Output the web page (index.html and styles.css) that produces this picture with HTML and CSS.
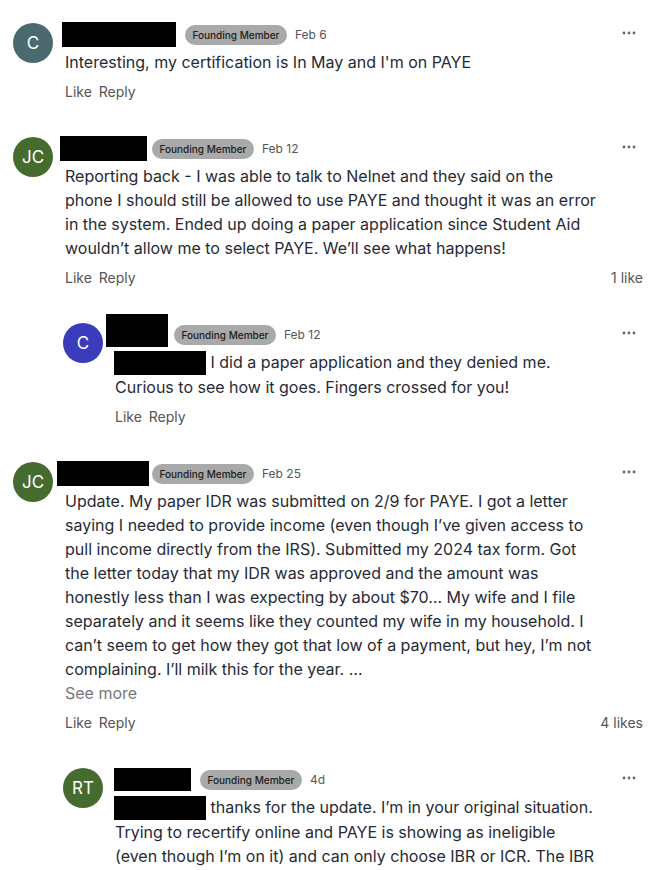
FILE: index.html
```html
<!DOCTYPE html>
<html>
<head>
  <title>Comments</title>
  <link rel="stylesheet" href="styles.css">
</head>
<body>
  <div class="thread">

    <div class="comment">
      <div class="avatar teal">C</div>
      <div class="comment-main">
        <div class="comment-head">
          <span class="redact name-1"></span>
          <span class="badge">Founding Member</span>
          <span class="date">Feb 6</span>
          <svg class="dots" width="16" height="16" viewBox="0 0 16 16"><circle cx="3" cy="8" r="1.4"/><circle cx="8" cy="8" r="1.4"/><circle cx="13" cy="8" r="1.4"/></svg>
        </div>
        <p class="comment-text">Interesting, my certification is In May and I'm on PAYE</p>
        <div class="comment-actions">
          <span><a>Like</a> <a>Reply</a></span>
        </div>
      </div>
    </div>

    <div class="comment">
      <div class="avatar green">JC</div>
      <div class="comment-main">
        <div class="comment-head">
          <span class="redact name-2"></span>
          <span class="badge">Founding Member</span>
          <span class="date">Feb 12</span>
          <svg class="dots" width="16" height="16" viewBox="0 0 16 16"><circle cx="3" cy="8" r="1.4"/><circle cx="8" cy="8" r="1.4"/><circle cx="13" cy="8" r="1.4"/></svg>
        </div>
        <p class="comment-text">Reporting back - I was able to talk to Nelnet and they said on the phone I should still be allowed to use PAYE and thought it was an error in the system. Ended up doing a paper application since Student Aid wouldn’t allow me to select PAYE. We’ll see what happens!</p>
        <div class="comment-actions">
          <span><a>Like</a> <a>Reply</a></span>
          <span class="likes">1 like</span>
        </div>
      </div>
    </div>

    <div class="comment reply">
      <div class="avatar blue">C</div>
      <div class="comment-main">
        <div class="comment-head">
          <span class="redact name-3"></span>
          <span class="badge">Founding Member</span>
          <span class="date">Feb 12</span>
          <svg class="dots" width="16" height="16" viewBox="0 0 16 16"><circle cx="3" cy="8" r="1.4"/><circle cx="8" cy="8" r="1.4"/><circle cx="13" cy="8" r="1.4"/></svg>
        </div>
        <p class="comment-text"><span class="redact mention"></span> I did a paper application and they denied me. Curious to see how it goes. Fingers crossed for you!</p>
        <div class="comment-actions">
          <span><a>Like</a> <a>Reply</a></span>
        </div>
      </div>
    </div>

    <div class="comment">
      <div class="avatar green">JC</div>
      <div class="comment-main">
        <div class="comment-head">
          <span class="redact name-4"></span>
          <span class="badge">Founding Member</span>
          <span class="date">Feb 25</span>
          <svg class="dots" width="16" height="16" viewBox="0 0 16 16"><circle cx="3" cy="8" r="1.4"/><circle cx="8" cy="8" r="1.4"/><circle cx="13" cy="8" r="1.4"/></svg>
        </div>
        <p class="comment-text">Update. My paper IDR was submitted on 2/9 for PAYE. I got a letter saying I needed to provide income (even though I’ve given access to pull income directly from the IRS). Submitted my 2024 tax form. Got the letter today that my IDR was approved and the amount was honestly less than I was expecting by about $70… My wife and I file separately and it seems like they counted my wife in my household. I can’t seem to get how they got that low of a payment, but hey, I’m not complaining. I’ll milk this for the year. …</p>
        <a class="see-more">See more</a>
        <div class="comment-actions">
          <span><a>Like</a> <a>Reply</a></span>
          <span class="likes">4 likes</span>
        </div>
      </div>
    </div>

    <div class="comment reply">
      <div class="avatar green">RT</div>
      <div class="comment-main">
        <div class="comment-head">
          <span class="redact name-5"></span>
          <span class="badge">Founding Member</span>
          <span class="date">4d</span>
          <svg class="dots" width="16" height="16" viewBox="0 0 16 16"><circle cx="3" cy="8" r="1.4"/><circle cx="8" cy="8" r="1.4"/><circle cx="13" cy="8" r="1.4"/></svg>
        </div>
        <p class="comment-text"><span class="redact mention"></span> thanks for the update. I’m in your original situation. Trying to recertify online and PAYE is showing as ineligible (even though I’m on it) and can only choose IBR or ICR. The IBR</p>
      </div>
    </div>

  </div>
</body>
</html>
```

FILE: styles.css
```css
body {
  margin: 0;
  background-color: #fff;
  font-family: Inter, "Noto Sans", sans-serif;
  color: #272a35;
  overflow: hidden;
}

.thread {
  padding: 22px 19px 0 13px;
  display: flex;
  flex-direction: column;
  gap: 34px;
}

.comment {
  display: flex;
  gap: 12px;
}

.comment.reply {
  padding-left: 50px;
}

.avatar {
  flex: none;
  width: 40px;
  height: 40px;
  border-radius: 50%;
  color: #fff;
  font-size: 17px;
  display: flex;
  align-items: center;
  justify-content: center;
  margin-top: 1px;
}

.teal { background-color: #4a6a6f; }
.green { background-color: #466b2f; }
.blue { background-color: #3a3cbc; }

.comment-main {
  flex: 1;
  min-width: 0;
}

.comment-head {
  display: flex;
  align-items: center;
  height: 25px;
}

.redact {
  display: inline-block;
  background-color: #000;
}

.name-1 { width: 114px; height: 25px; margin-left: -3px; margin-right: 9px; }
.name-2 { width: 87px; height: 25px; margin-left: -5px; margin-right: 5px; }
.name-3 { width: 62px; height: 33px; margin-left: -9px; margin-right: 6px; margin-top: -8px; }
.name-4 { width: 92px; height: 25px; margin-left: -8px; margin-right: 3px; }
.name-5 { width: 77px; height: 23px; margin-left: -1px; margin-right: 9px; }

.mention {
  width: 92px;
  height: 24px;
  vertical-align: -7px;
  margin-left: -1px;
}

.badge {
  background-color: #a9a9a9;
  color: #1c1c1c;
  font-size: 10px;
  font-weight: 500;
  width: 102px;
  height: 20px;
  line-height: 20px;
  text-align: center;
  border-radius: 10px;
}

.date {
  margin-left: 8px;
  font-size: 12px;
  color: #555;
}

.dots {
  margin-left: auto;
  margin-right: 6px;
  margin-top: -4px;
  fill: #666;
}

.comment-text {
  margin: 3px 0 0;
  max-width: 535px;
  font-size: 16px;
  line-height: 24px;
}

.reply .comment-text {
  max-width: 485px;
}

.see-more {
  display: block;
  font-size: 16px;
  line-height: 24px;
  color: #777;
}

.comment-actions {
  display: flex;
  justify-content: space-between;
  margin-top: 8px;
  font-size: 14px;
  line-height: 20px;
  color: #555;
}

.comment-actions a {
  margin-right: 3px;
}
```
